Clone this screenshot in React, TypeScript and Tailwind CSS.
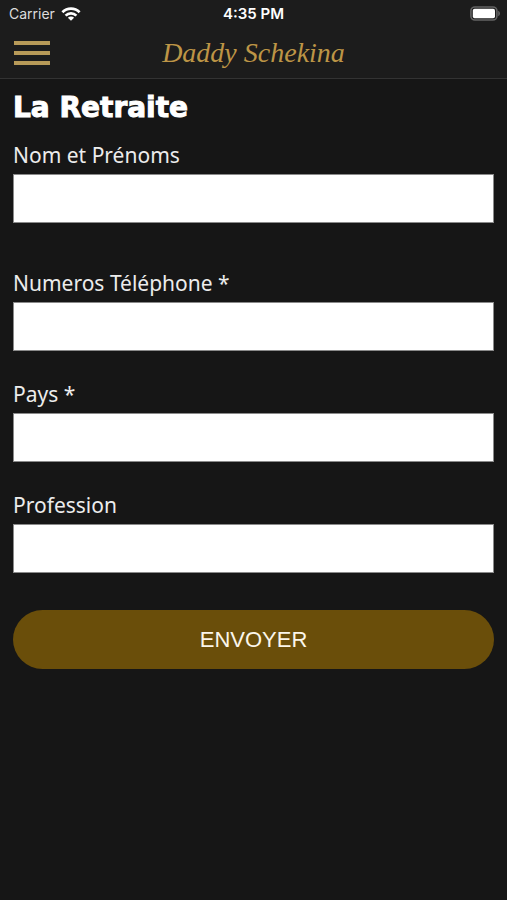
import type { FormEvent } from "react"

type Field = {
  id: string
  label: string
  type: string
  required?: boolean
  className: string
}

const fields: Field[] = [
  { id: "nom", label: "Nom et Prénoms", type: "text", className: "mb-12" },
  { id: "telephone", label: "Numeros Téléphone *", type: "tel", required: true, className: "mb-[31px]" },
  { id: "pays", label: "Pays *", type: "text", required: true, className: "mb-[31px]" },
  { id: "profession", label: "Profession", type: "text", className: "mb-[37px]" }
]

function WifiIcon() {
  return (
    <svg viewBox="0 0 20 15" className="h-[15px] w-5" fill="none" stroke="white" strokeWidth="2.7" aria-hidden="true">
      <path d="M1.4 5.2a12.2 12.2 0 0 1 17.2 0" />
      <path d="M4.6 8.6a7.6 7.6 0 0 1 10.8 0" />
      <path d="M10 13.8 6.9 10.8a4.4 4.4 0 0 1 6.2 0Z" fill="white" stroke="none" />
    </svg>
  )
}

function BatteryIcon() {
  return (
    <svg viewBox="0 0 32 16" className="h-4 w-8" aria-hidden="true">
      <rect x="0.9" y="1" width="26" height="13" rx="4" fill="none" stroke="#636363" strokeWidth="1.6" />
      <rect x="2.8" y="2.8" width="22.2" height="9.4" rx="1.8" fill="white" />
      <path d="M28.2 4.8c2.4 1 2.4 4.4 0 5.4Z" fill="#636363" />
    </svg>
  )
}

function StatusBar() {
  return (
    <div className="grid h-7 grid-cols-[1fr_auto_1fr] items-center px-[9px] font-['Inter',sans-serif] text-[14px] leading-5 text-white">
      <div className="flex items-center gap-[6px] text-[#dcdcdc]">
        <span>Carrier</span>
        <WifiIcon />
      </div>
      <span className="text-[15px] font-semibold">4:35 PM</span>
      <div className="-mr-1 flex justify-end">
        <BatteryIcon />
      </div>
    </div>
  )
}

function NavBar() {
  return (
    <div className="grid h-[50px] grid-cols-[36px_1fr_36px] items-center px-[14px]">
      <button type="button" aria-label="Menu" className="flex flex-col gap-[6px]">
        <span className="h-1 w-full bg-[#b79a58]" />
        <span className="h-1 w-full bg-[#b79a58]" />
        <span className="h-1 w-full bg-[#b79a58]" />
      </button>
      <span className="text-center font-['Liberation_Serif',serif] text-[28px] leading-9 text-[#bd9546] italic">
        Daddy Schekina
      </span>
    </div>
  )
}

export default function App() {
  const handleSubmit = (event: FormEvent<HTMLFormElement>) => {
    event.preventDefault()
  }

  return (
    <div className="min-h-screen bg-[#161616] text-white">
      <header className="border-b border-[#333333] bg-[#1c1c1c]">
        <StatusBar />
        <NavBar />
      </header>

      <main className="px-[13px] pt-[13px]">
        <h1 className="font-['DejaVu_Sans',sans-serif] text-[28px] leading-8 font-bold [-webkit-text-stroke:1px_white]">La Retraite</h1>

        <form onSubmit={handleSubmit} noValidate className="pt-[19px]">
          {fields.map((field) => (
            <div key={field.id} className={field.className}>
              <label htmlFor={field.id} className="block pb-[7px] font-['Noto_Sans',sans-serif] text-[21px] leading-6 text-[#ececec]">
                {field.label}
              </label>
              <input
                id={field.id}
                name={field.id}
                type={field.type}
                required={field.required}
                className="block h-[49px] w-full border border-[#8a8a8a] bg-white px-3 text-[20px] text-black outline-none"
              />
            </div>
          ))}

          <button
            type="submit"
            className="h-[59px] w-full rounded-full bg-[#6a4e0a] font-['Liberation_Sans',sans-serif] text-[22px] text-[#fbf6ea]"
          >
            ENVOYER
          </button>
        </form>
      </main>
    </div>
  )
}
